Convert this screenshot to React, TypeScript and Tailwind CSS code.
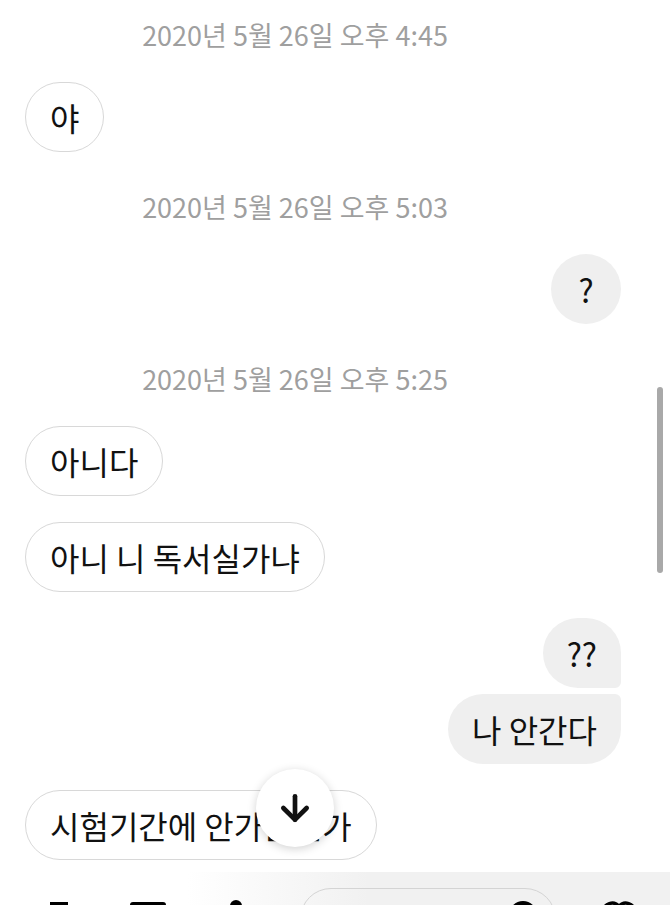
import { ArrowDown } from "lucide-react";

const font = { fontFamily: '"Noto Sans CJK KR", "Noto Sans", sans-serif' };

const Stamp = ({ text, first }: { text: string; first?: boolean }) => (
  <div
    className={`${first ? "mt-[22px]" : "mt-[42px]"} mb-[30px] h-[30px] pb-[4px] pr-[80px] text-center text-[27px] leading-[26px] font-normal text-[#9f9f9f]`}
  >
    {text}
  </div>
);

const Theirs = ({ text }: { text: string }) => (
  <div className="flex pl-[25px]">
    <div className="flex h-[70px] min-w-[70px] items-center justify-center rounded-full border-[1.5px] border-[#d8d8d8] bg-white px-6 text-[32px] text-[#111]">
      {text}
    </div>
  </div>
);

const Mine = ({ text, corner }: { text: string; corner?: string }) => (
  <div className="flex justify-end pr-[49px]">
    <div
      className={`flex h-[70px] min-w-[70px] items-center justify-center rounded-[35px] bg-[#efefef] px-6 text-[32px] text-[#111] ${corner ?? ""}`}
    >
      {text}
    </div>
  </div>
);

export default function App() {
  return (
    <div style={font} className="relative h-[905px] w-[670px] overflow-hidden bg-white">
      <div className="flex flex-col">
        <Stamp text="2020년 5월 26일 오후 4:45" first />
        <Theirs text="야" />

        <Stamp text="2020년 5월 26일 오후 5:03" />
        <Mine text="?" />

        <Stamp text="2020년 5월 26일 오후 5:25" />
        <div className="flex flex-col gap-[26px]">
          <Theirs text="아니다" />
          <Theirs text="아니 니 독서실가냐" />
          <div className="flex flex-col gap-[6px]">
            <Mine text="??" corner="rounded-br-[6px]" />
            <Mine text="나 안간다" corner="rounded-tr-[6px]" />
          </div>
          <Theirs text="시험기간에 안가는건가" />
        </div>

        {/* bottom composer bar */}
        <div className="mt-[12px] flex h-[80px] items-start bg-linear-to-r from-white from-[28%] to-[#f1f1f1] to-[55%]">
          <div className="ml-[50px] mt-[30px] h-[20px] w-[18px] border-t-[3px] border-black" />
          <div className="ml-[62px] mt-[30px] h-[26px] w-[36px] rounded-[3px] border-[3px] border-black" />
          <div className="ml-[64px] mt-[28px] h-[26px] w-[12px] rounded-full bg-black" />
          <div className="ml-[58px] mt-[16px] flex h-[62px] w-[256px] justify-end rounded-full border-[1.5px] border-[#d4d4d4] pr-[18px]">
            <div className="mt-[12px] h-[28px] w-[28px] rounded-full bg-black" />
          </div>
          <div className="ml-[42px] mt-[26px]">
            <svg width="42" height="38" viewBox="0 0 24 22" fill="none" stroke="black" strokeWidth="2">
              <path d="M12 20s-9-5.5-9-12a5 5 0 0 1 9-3 5 5 0 0 1 9 3c0 6.5-9 12-9 12z" />
            </svg>
          </div>
        </div>
      </div>

      {/* scrollbar */}
      <div className="absolute right-[7px] top-[387px] h-[186px] w-[6px] rounded-full bg-[#a9a9a9]" />

      {/* scroll to bottom button */}
      <div className="absolute left-[256px] top-[769px] flex h-[78px] w-[78px] items-center justify-center rounded-full bg-white shadow-[0_2px_10px_rgba(0,0,0,0.18)]">
        <ArrowDown size={40} strokeWidth={2.8} color="#111" />
      </div>
    </div>
  );
}
